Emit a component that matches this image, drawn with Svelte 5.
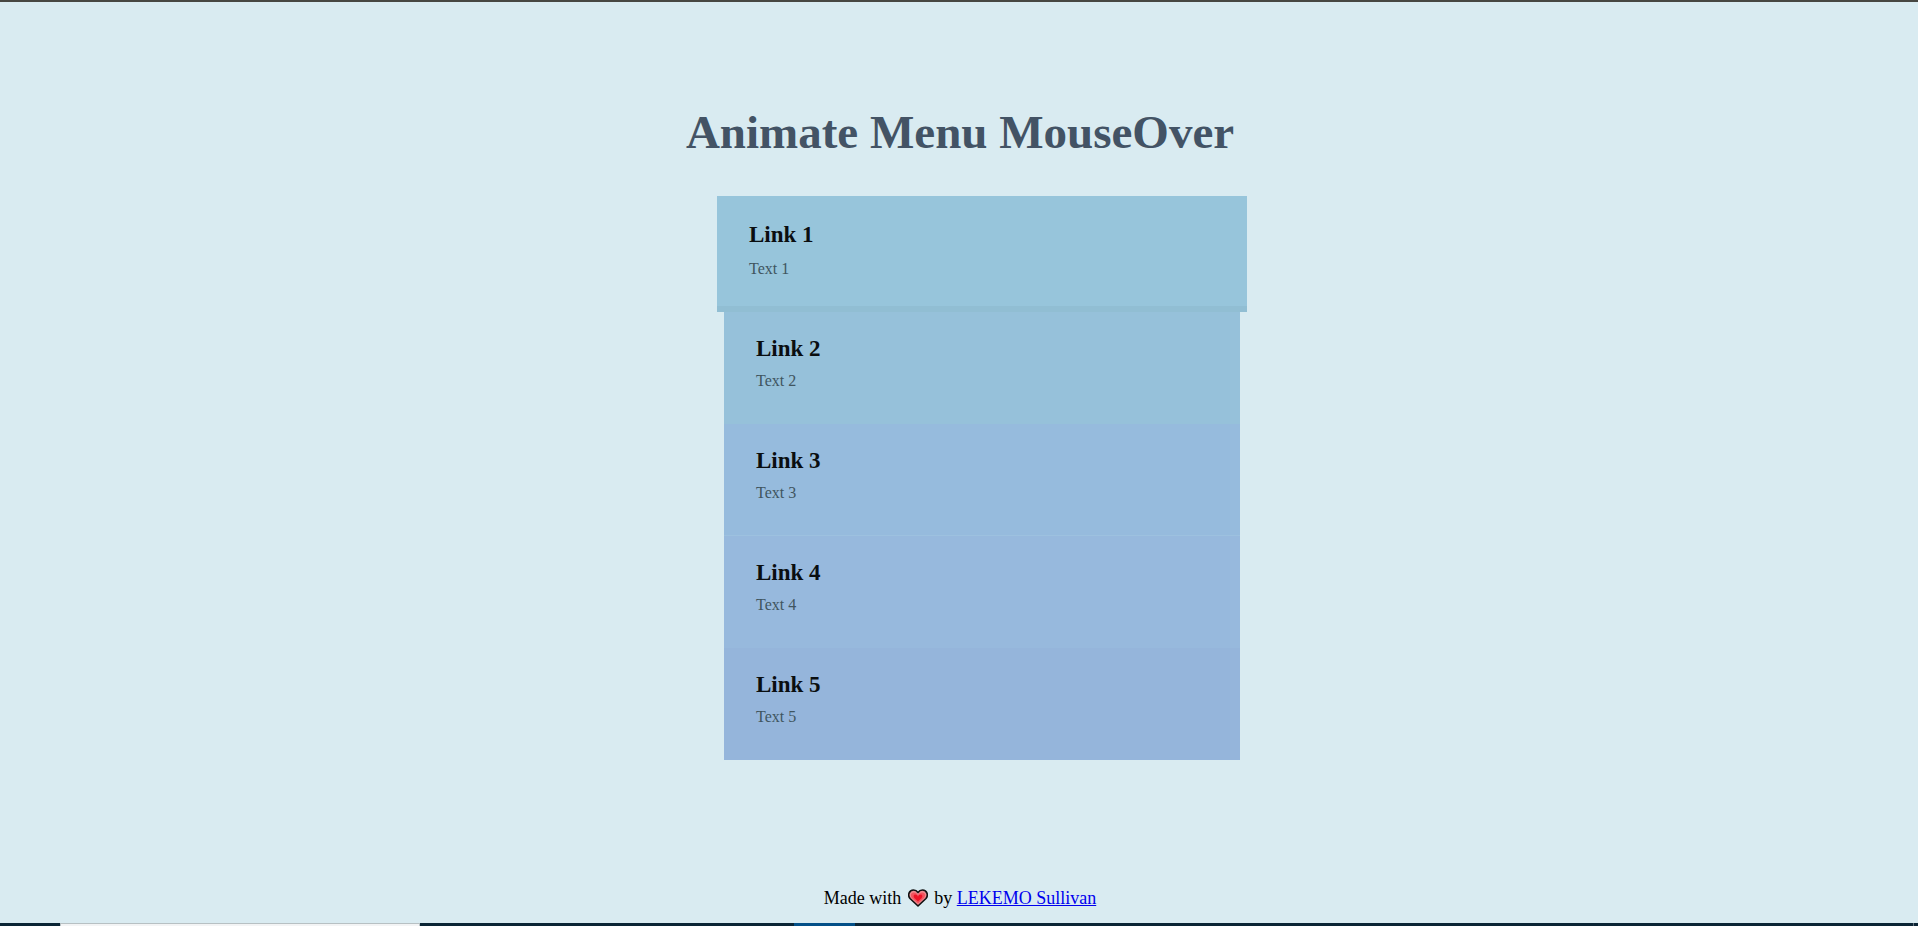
<script>
  const links = [1, 2, 3, 4, 5];
</script>

<div class="page">
  <main>
    <h1>Animate Menu MouseOver</h1>
    <nav aria-label="Menu">
      {#each links as n}
        <a class="item item{n}" href="#link{n}">
          <span class="name">Link {n}</span>
          <span class="text">Text {n}</span>
        </a>
      {/each}
    </nav>
  </main>
  <footer>
    Made with
    <svg viewBox="0 0 20 18" width="20" height="18" aria-hidden="true">
      <path d="M10 17 L2 9.500 C-.5 6.500 .8 1 5.500 1 C7.600 1 9 2 10 3.500 C11 2 12.400 1 14.500 1 C19.200 1 20.500 6.500 18 9.500 Z" fill="#f0888e" stroke="#111" stroke-width="1.600" stroke-linejoin="round" />
      <path d="M10 14.500 L4 9 C2 6.500 3 3.600 5.700 3.600 C7.700 3.600 9 4.500 10 6.200 C11 4.500 12.300 3.600 14.300 3.600 C17 3.600 18 6.500 16 9 Z" fill="#f2545f" />
      <path d="M10 12.500 L6.300 9 C5 7.300 5.700 5.600 7.200 5.600 C8.500 5.600 9.400 6.500 10 7.700 C10.600 6.500 11.500 5.600 12.800 5.600 C14.300 5.600 15 7.300 13.700 9 Z" fill="#ee1326" />
    </svg>
    by <a href="#author">LEKEMO Sullivan</a>
  </footer>
  <div class="strip"><span class="field"></span><span class="active"></span><span class="end"></span></div>
</div>

<style>
  :global(body) {
    background: #d9ebf1;
  }
  .page {
    box-sizing: border-box;
    display: flex;
    flex-direction: column;
    min-height: 100vh;
    border-top: 2px solid #474742;
    font-family: "Liberation Serif", "Times New Roman", serif;
    font-size: 18px;
    color: #000;
  }
  main {
    flex: 1;
    display: flex;
    flex-direction: column;
    align-items: center;
    padding: 103px 16px 40px 18px;
  }
  h1 {
    margin: 0 0 37px;
    font-size: 47px;
    line-height: 54px;
    color: #435365;
  }
  nav {
    width: 516px;
    max-width: 100%;
    padding-left: 44px;
  }
  .item {
    box-sizing: border-box;
    display: flex;
    flex-direction: column;
    gap: 6px;
    height: 112px;
    padding: 24px 32px;
    color: #0a0e10;
    text-decoration: none;
  }
  .name {
    font-size: 23px;
    line-height: 26px;
    font-weight: bold;
  }
  .text {
    font-size: 16px;
    line-height: 26px;
    color: #40555f;
  }
  .item1 {
    gap: 8px;
    height: 116px;
    margin: 0 -7px;
    padding-top: 26px;
    background: #97c5db;
    border-bottom: 6px solid #91bed3;
  }
  .item2 {
    background: #96c1da;
  }
  .item3 {
    background: #96bbdd;
    border-bottom: 1px solid #9dc1df;
  }
  .item4 {
    background: #97b9dd;
  }
  .item5 {
    background: #95b5db;
  }
  footer {
    padding: 0 0 14px 2px;
    line-height: 22px;
    text-align: center;
  }
  footer svg {
    margin: 0 2px;
    vertical-align: -3px;
  }
  footer a {
    color: #0000ee;
  }
  .strip {
    display: flex;
    height: 3px;
    padding-left: 60px;
    background: #0b2536;
  }
  .field {
    box-sizing: border-box;
    width: 360px;
    background: #f3f4f5;
    border: 1px solid #b7c0c3;
    border-bottom: 0;
  }
  .active {
    width: 61px;
    margin-left: 374px;
    background: #045088;
  }
  .end {
    width: 1px;
    margin: 0 4px 0 auto;
    background: #68757f;
  }
</style>
